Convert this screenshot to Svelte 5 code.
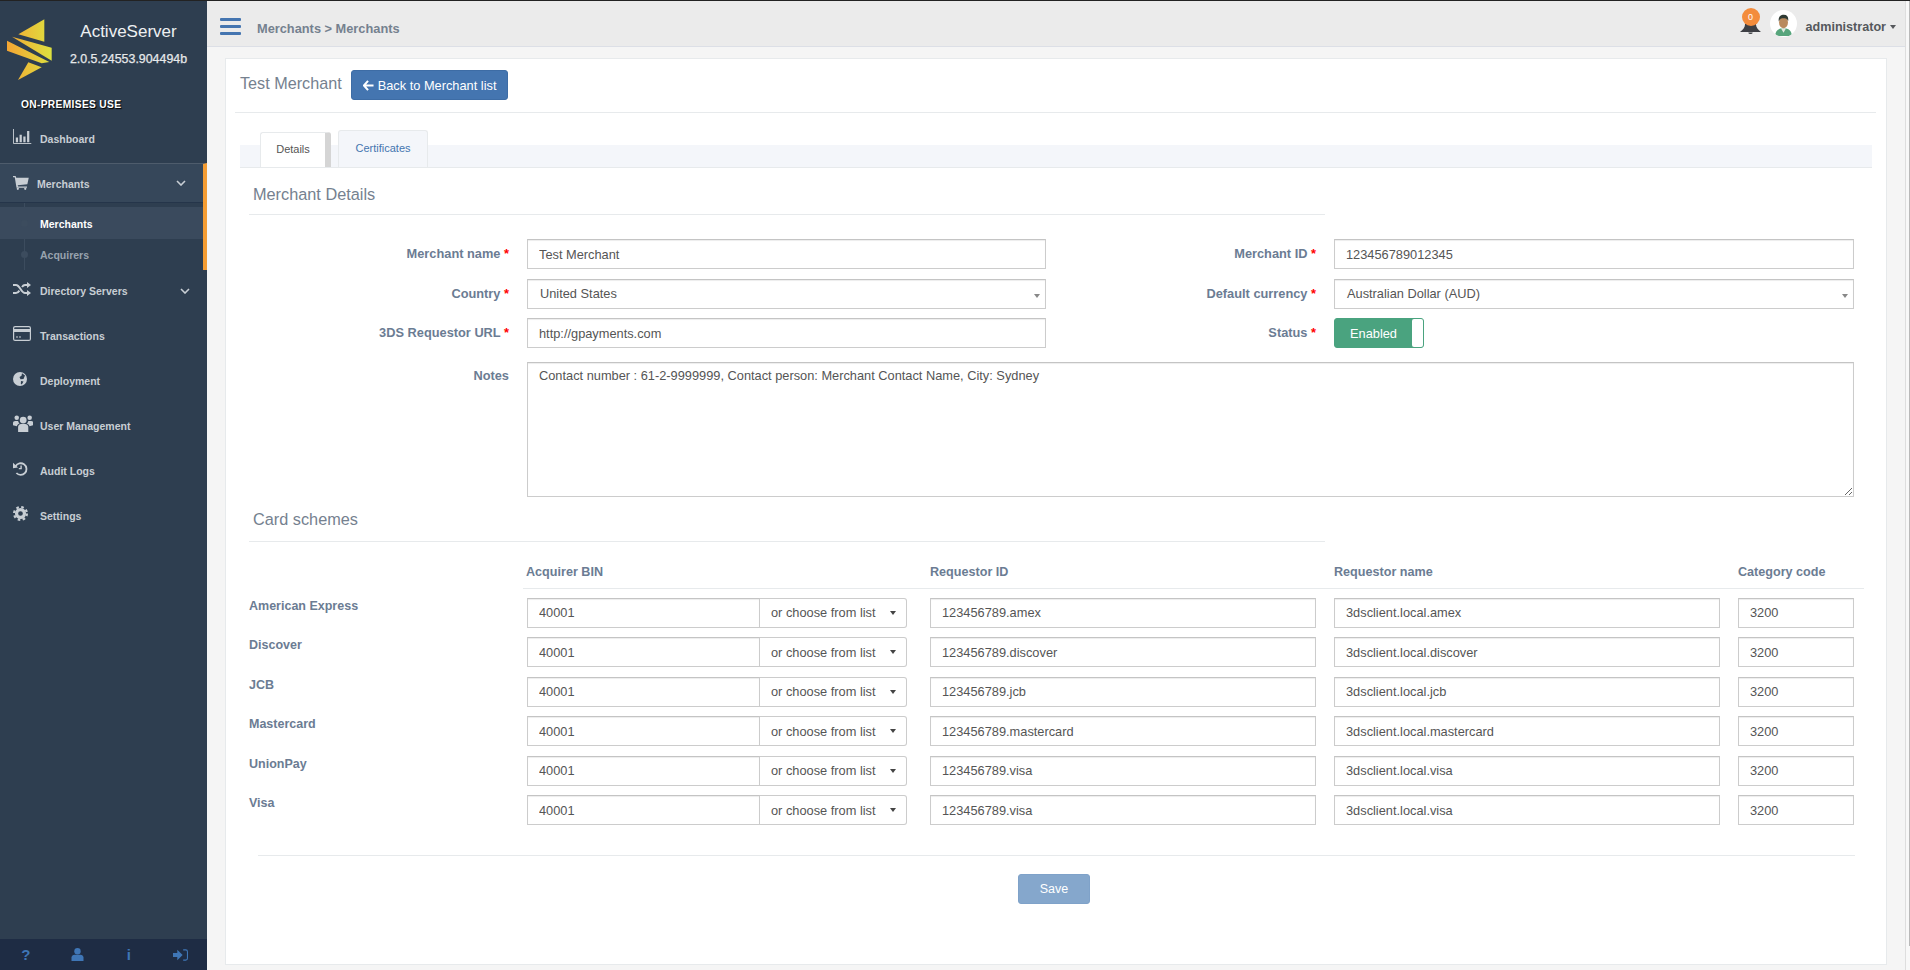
<script lang="ts">
	const schemes = [
		{ name: 'American Express', req: '123456789.amex', client: '3dsclient.local.amex' },
		{ name: 'Discover', req: '123456789.discover', client: '3dsclient.local.discover' },
		{ name: 'JCB', req: '123456789.jcb', client: '3dsclient.local.jcb' },
		{ name: 'Mastercard', req: '123456789.mastercard', client: '3dsclient.local.mastercard' },
		{ name: 'UnionPay', req: '123456789.visa', client: '3dsclient.local.visa' },
		{ name: 'Visa', req: '123456789.visa', client: '3dsclient.local.visa' }
	];
	const notes = 'Contact number : 61-2-9999999, Contact person: Merchant Contact Name, City: Sydney';
</script>

<div class="app">
	<aside class="sidebar">
		<div class="brand">
			<div class="brand-top">
				<svg class="logo" viewBox="21 27 135 183" aria-hidden="true">
					<defs>
						<linearGradient id="lg" gradientUnits="userSpaceOnUse" x1="21" y1="0" x2="156" y2="0">
							<stop offset="0" stop-color="#f4a533" />
							<stop offset="1" stop-color="#dde13f" />
						</linearGradient>
					</defs>
					<g fill="url(#lg)">
						<polygon points="133,28 55,73 133,95" />
						<polygon points="36,80 155,113 155,152" />
						<polygon points="21,92 21,122 125,160 148,156" />
						<polygon points="85,157 125,172 54,210" />
					</g>
				</svg>
				<div class="brand-text">
					<div class="product">ActiveServer</div>
					<div class="version">2.0.5.24553.904494b</div>
				</div>
			</div>
			<div class="usage">ON-PREMISES USE</div>
		</div>

		<nav>
			<a class="item">
				<svg class="ico" viewBox="0 0 20 16" aria-hidden="true">
					<path d="M0.500 0v15.500h19" fill="none" stroke="currentColor" />
					<path d="M3 9h2.400v5H3zM7 6h2.400v8H7zM11 8h2.400v6H11zM15 2h2.400v12H15z" fill="currentColor" />
				</svg>
				<span>Dashboard</span>
			</a>

			<div class="group">
				<a class="item head">
					<svg class="ico sm" viewBox="0 0 18 16" aria-hidden="true">
						<path d="M0 0h3l.7 2H18l-1.600 7.500-11 1 .4 1.500H16v1.500H4L2 1.500H0z" fill="currentColor" />
						<circle cx="5.500" cy="14.700" r="1.300" fill="currentColor" />
						<circle cx="14" cy="14.700" r="1.300" fill="currentColor" />
					</svg>
					<span>Merchants</span>
					<svg class="chev" viewBox="0 0 10 6" aria-hidden="true"><path d="M1 1l4 4 4-4" /></svg>
				</a>
				<div class="sub">
					<a class="sub-item active"><i></i><span>Merchants</span></a>
					<a class="sub-item"><i></i><span>Acquirers</span></a>
				</div>
			</div>

			<a class="item after-group">
				<svg class="ico sm" viewBox="0 0 18 14" aria-hidden="true">
					<path d="M0 3h3c4 0 5 8 9 8h2M0 11h3c1.500 0 2.500-1 3.400-2.400M9 5c.8-1.200 1.700-2 3-2h2" fill="none" stroke="currentColor" stroke-width="2" />
					<path d="M14 0l4 3-4 3zM14 8l4 3-4 3z" fill="currentColor" />
				</svg>
				<span>Directory Servers</span>
				<svg class="chev far" viewBox="0 0 10 6" aria-hidden="true"><path d="M1 1l4 4 4-4" /></svg>
			</a>
			<a class="item">
				<svg class="ico" viewBox="0 0 18 15" aria-hidden="true">
					<rect x=".6" y=".6" width="16.800" height="13.800" rx="1.500" fill="none" stroke="currentColor" stroke-width="1.200" />
					<path d="M1 3h16v3H1zM3 10.500h2v1H3zM6 10.500h2v1H6z" fill="currentColor" />
				</svg>
				<span>Transactions</span>
			</a>
			<a class="item">
				<svg class="ico sm" viewBox="0 0 14 14" aria-hidden="true">
					<circle cx="7" cy="7" r="7" fill="currentColor" />
					<path d="M9 1.200l3 2.300-1.500 3.500-3 .3-1-2.300 2-1.300zM8 9l2.500.5-1.700 3-1-.8z" fill="#2e3e50" />
				</svg>
				<span>Deployment</span>
			</a>
			<a class="item">
				<svg class="ico lg" viewBox="0 0 18 15" aria-hidden="true">
					<g fill="currentColor">
						<circle cx="9" cy="4.500" r="3" />
						<circle cx="3.300" cy="2.500" r="2" />
						<circle cx="14.700" cy="2.500" r="2" />
						<path d="M4.500 15V10.500C4.500 9 6 8 7 8h4c1 0 2.500 1 2.500 2.500V15z" />
						<path d="M0 9V7c0-1 .8-1.800 2-1.800h2.500c.2 1 .6 1.800 1.300 2.300C4.300 8 3.500 9 3.500 10zM18 9V7c0-1-.8-1.800-2-1.800h-2.500c-.2 1-.6 1.800-1.300 2.300 1.500.5 2.300 1.500 2.300 2.500z" />
					</g>
				</svg>
				<span>User Management</span>
			</a>
			<a class="item">
				<svg class="ico sm" viewBox="0 0 15 14" aria-hidden="true">
					<path d="M2.600 4.200A5.800 5.800 0 1 1 3.400 11" fill="none" stroke="currentColor" stroke-width="1.800" />
					<path d="M0 .8l5 4.600-5 .8zM7.400 3.500h1.400v3.800H5.800V6h1.600z" fill="currentColor" />
				</svg>
				<span>Audit Logs</span>
			</a>
			<a class="item">
				<svg class="ico" viewBox="0 0 14 14" aria-hidden="true">
					<circle cx="7" cy="7" r="3.700" fill="none" stroke="currentColor" stroke-width="3" />
					<circle cx="7" cy="7" r="6" fill="none" stroke="currentColor" stroke-width="2" stroke-dasharray="2.400 2.310" />
				</svg>
				<span>Settings</span>
			</a>
		</nav>

		<div class="side-foot">
			<span class="glyph">?</span>
			<svg viewBox="0 0 12 13" aria-hidden="true">
				<circle cx="6" cy="3.200" r="3.200" fill="currentColor" />
				<path d="M0 13V9.500C0 8 1.500 6.800 3 6.800h6c1.500 0 3 1.200 3 2.700V13z" fill="currentColor" />
			</svg>
			<span class="glyph">i</span>
			<svg viewBox="0 0 14 11" aria-hidden="true">
				<path d="M0 3.700h4V.5l5 5-5 5V7.300H0z" fill="currentColor" />
				<path d="M9.500 .7h2.300c1 0 1.700.7 1.700 1.700v6.200c0 1-.7 1.700-1.700 1.700H9.500" fill="none" stroke="currentColor" />
			</svg>
		</div>
	</aside>

	<div class="main">
		<header class="topbar">
			<div class="burger"><i></i><i></i><i></i></div>
			<div class="crumbs">Merchants &gt; Merchants</div>
			<div class="user">
				<div class="bell">
					<svg viewBox="0 0 21 15" aria-hidden="true">
						<path d="M10.500 0C6 0 5 3 5 5.500c0 3-2 5-5 7.500h21c-3-2.500-5-4.500-5-7.500C16 3 15 0 10.500 0z" fill="#3d3f44" />
						<path d="M8.300 13.500a2.200 1.500 0 0 0 4.400 0z" fill="#3d3f44" />
					</svg>
					<span class="badge">0</span>
				</div>
				<div class="avatar">
					<svg viewBox="0 0 26 26" aria-hidden="true">
						<path d="M5 25c0-5 3-7.500 8-7.500s8 2.500 8 7.500z" fill="#57a57c" />
						<path d="M10.500 17.500h5L13 22z" fill="#e0e8df" />
						<ellipse cx="13" cy="12" rx="4.300" ry="5.500" fill="#b98a5e" />
						<path d="M8.500 11c-.8-4 1.500-6.500 4.800-6.500S18 7 17.500 10.500c-1-2-2.500-2.500-4.500-2.500s-3.500.5-4.500 3z" fill="#2f3a33" />
					</svg>
				</div>
				<span class="uname">administrator</span>
				<span class="ucaret"></span>
			</div>
		</header>

		<main class="content">
			<section class="card">
				<div class="card-head">
					<h2>Test Merchant</h2>
					<button class="back" type="button">
						<svg viewBox="0 0 12 11" aria-hidden="true"><path d="M5.500 .5L1 5.500l4.500 5M1.500 5.500H11.500" fill="none" stroke="currentColor" stroke-width="2.200" /></svg>
						Back to Merchant list
					</button>
				</div>

				<div class="tabs">
					<div class="tab current">Details</div>
					<div class="tab">Certificates</div>
				</div>

				<div class="pane">
					<h3>Merchant Details</h3>
					<div class="form">
						<label class="lbl" for="mn">Merchant name <b>*</b></label>
						<input id="mn" class="inp" value="Test Merchant" />
						<label class="lbl" for="mi">Merchant ID <b>*</b></label>
						<input id="mi" class="inp" value="123456789012345" />

						<span class="lbl">Country <b>*</b></span>
						<div class="inp sel">United States<i></i></div>
						<span class="lbl">Default currency <b>*</b></span>
						<div class="inp sel">Australian Dollar (AUD)<i></i></div>

						<label class="lbl" for="ur">3DS Requestor URL <b>*</b></label>
						<input id="ur" class="inp" value="http://gpayments.com" />
						<span class="lbl">Status <b>*</b></span>
						<div class="toggle"><span>Enabled</span><i></i></div>

						<label class="lbl notes-lbl" for="no">Notes</label>
						<textarea id="no" class="inp notes" value={notes}></textarea>
					</div>

					<h3 class="schemes-title">Card schemes</h3>
					<div class="th">
						<span>Acquirer BIN</span>
						<span>Requestor ID</span>
						<span>Requestor name</span>
						<span>Category code</span>
					</div>
					<div class="schemes">
						{#each schemes as s (s.name)}
							<div class="scheme-name">{s.name}</div>
							<div class="bin">
								<input class="inp" value="40001" />
								<div class="choose">or choose from list<i></i></div>
							</div>
							<input class="inp c-req" value={s.req} />
							<input class="inp c-name" value={s.client} />
							<input class="inp c-code" value="3200" />
						{/each}
					</div>

					<div class="actions">
						<button class="save" type="button">Save</button>
					</div>
				</div>
			</section>
		</main>
	</div>

	<div class="scrollbar"><i></i></div>
</div>

<style>
	:global(body) {
		background: #f5f5f5;
		font-family: 'Liberation Sans', Arial, sans-serif;
		margin: 0;
	}

	.app {
		border-top: 1px solid #222;
		box-sizing: border-box;
		display: grid;
		grid-template-columns: 207px 1fr 5px;
		height: 970px;
		overflow: hidden;
	}

	/* sidebar */
	.sidebar {
		background: #2e3e50;
		display: flex;
		flex-direction: column;
		height: 969px;
	}

	.brand {
		height: 115px;
	}

	.brand-top {
		display: flex;
		padding: 18px 0 0 7px;
	}

	.logo {
		display: block;
		height: 61px;
		width: 45px;
	}

	.brand-text {
		color: #fff;
		flex: 1;
		padding-right: 2px;
		text-align: center;
	}

	.product {
		color: #eef0f2;
		font-size: 17px;
		line-height: 20px;
		margin-top: 3px;
	}

	.version {
		color: #e6e8ea;
		font-size: 12.400px;
		line-height: 16px;
		margin-top: 9px;
		-webkit-text-stroke: 0.25px #e6e8ea;
	}

	.usage {
		color: #fff;
		font-size: 10.200px;
		font-weight: 700;
		letter-spacing: 0.35px;
		margin: 19px 0 0 21px;
		text-shadow: 1px 1px 1px #000;
	}

	.item {
		align-items: center;
		color: #c8ced4;
		display: flex;
		font-size: 10.500px;
		font-weight: 700;
		height: 45px;
		padding-left: 13px;
		position: relative;
	}

	.item span {
		left: 40px;
		position: absolute;
	}

	.ico {
		display: block;
		height: 15px;
		margin-top: -4px;
		width: auto;
	}

	.ico.sm {
		height: 14px;
	}

	.ico.lg {
		height: 17px;
	}

	.chev {
		fill: none;
		height: 6px;
		left: 176px;
		position: absolute;
		stroke: #c8ced4;
		stroke-width: 1.600;
		width: 10px;
	}

	.chev.far {
		left: 180px;
	}

	.group {
		background: #2e3e50;
		border-right: 4px solid #f59d33;
		border-top: 1px solid #4e5c6c;
		height: 106px;
		margin-top: 2px;
	}

	.after-group {
		height: 44px;
		margin-top: -1px;
	}

	.head {
		background: #36475a;
		border-bottom: 1px solid #25354a;
		box-sizing: border-box;
		height: 39px;
	}

	.head span {
		left: 37px;
		padding-top: 2px;
	}

	.head .ico {
		margin-top: 0;
	}

	.sub {
		padding-top: 4px;
		position: relative;
	}

	.sub::before {
		background: #3c4c5e;
		bottom: 0;
		content: '';
		left: 24px;
		position: absolute;
		top: 0;
		width: 1px;
	}

	.sub-item {
		align-items: center;
		color: #98a3ae;
		display: flex;
		font-size: 10.500px;
		font-weight: 700;
		height: 31px;
		position: relative;
	}

	.sub-item.active {
		background: #3a4a5d;
		color: #fff;
		height: 32px;
		padding-top: 1px;
		box-sizing: border-box;
	}

	.sub-item i {
		background: #3c4c5e;
		border-radius: 50%;
		height: 7px;
		left: 21px;
		position: absolute;
		width: 7px;
	}

	.sub-item span {
		padding-left: 40px;
	}

	.side-foot {
		align-items: center;
		background: #1e2c44;
		color: #3f76b6;
		display: grid;
		grid-template-columns: repeat(4, 1fr);
		height: 31px;
		justify-items: center;
		margin-top: auto;
		padding-right: 1px;
	}

	.side-foot svg {
		height: 13px;
		width: 13px;
	}

	.side-foot svg:last-child {
		height: 12px;
		width: 15px;
	}

	.glyph {
		font-size: 15px;
		font-weight: 700;
		line-height: 1;
	}

	/* header */
	.main {
		display: flex;
		flex-direction: column;
		min-width: 0;
	}

	.topbar {
		background: #ebebeb;
		border-bottom: 1px solid #dcdfe6;
		box-sizing: border-box;
		display: flex;
		flex: none;
		height: 46px;
		padding: 0 9px 0 13px;
	}

	.burger {
		display: flex;
		flex-direction: column;
		gap: 3.500px;
		margin: 17px 16px 0 0;
		width: 21px;
	}

	.burger i {
		background: #4475b0;
		border-radius: 1px;
		height: 3.300px;
	}

	.crumbs {
		color: #75818f;
		font-size: 12.800px;
		font-weight: 700;
		line-height: 16px;
		margin-top: 20px;
	}

	.user {
		align-items: center;
		display: flex;
		height: 45px;
		margin-left: auto;
	}

	.bell {
		align-self: flex-start;
		height: 26px;
		margin: 7px 9px 0 0;
		position: relative;
		width: 21px;
	}

	.bell svg {
		bottom: 0;
		display: block;
		height: 15px;
		left: 0;
		position: absolute;
		width: 21px;
	}

	.badge {
		background: #f38c3c;
		border-radius: 50%;
		color: #fff;
		font-size: 9px;
		height: 18px;
		left: 2px;
		line-height: 18px;
		position: absolute;
		text-align: center;
		top: 0;
		width: 18px;
	}

	.avatar {
		background: #fff;
		border-radius: 50%;
		height: 27px;
		margin: 0 9px 0 0;
		overflow: hidden;
		width: 27px;
	}

	.avatar svg {
		display: block;
	}

	.uname {
		color: #55585c;
		font-size: 12.600px;
		font-weight: 700;
		padding-top: 6px;
	}

	.ucaret {
		border-left: 3.500px solid transparent;
		border-right: 3.500px solid transparent;
		border-top: 4px solid #55585c;
		margin: 6px 0 0 4px;
	}

	/* content */
	.content {
		flex: 1;
		padding: 11px 18px 5px;
	}

	.card {
		background: #fff;
		border: 1px solid #e7eaec;
		box-sizing: border-box;
		height: 100%;
		padding: 11px 10px 0 9px;
	}

	.card-head {
		align-items: center;
		border-bottom: 1px solid #e7eaec;
		display: flex;
		gap: 9px;
		height: 30px;
		margin-bottom: 17px;
		padding: 0 0 12px 5px;
	}

	h2 {
		color: #75818f;
		font-size: 16.200px;
		font-weight: 400;
		margin: -3px 0 0;
	}

	.back {
		align-items: center;
		background: #4475b0;
		border: 1px solid #3d6ca5;
		border-radius: 3px;
		color: #fff;
		display: flex;
		font-family: inherit;
		font-size: 12.800px;
		gap: 4px;
		height: 30px;
		padding: 0 11px;
		white-space: nowrap;
		width: 157px;
	}

	.back svg {
		flex: none;
		height: 11px;
		width: 11px;
	}

	.tabs {
		align-items: flex-end;
		background: linear-gradient(to bottom, transparent 15px, #f4f6fa 15px);
		border-bottom: 1px solid #e7eaec;
		display: flex;
		gap: 7px;
		height: 37px;
		margin: 0 4px 0 5px;
		padding-left: 20px;
	}

	.tab {
		background: #f4f6fa;
		border: 1px solid #e7eaec;
		border-bottom: 0;
		border-radius: 3px 3px 0 0;
		box-sizing: border-box;
		color: #4475b0;
		font-size: 11px;
		height: 37px;
		line-height: 34px;
		text-align: center;
		width: 90px;
	}

	.tab.current {
		background: #fff;
		border-right: 6px solid #d5d5d5;
		color: #555;
		height: 35px;
		line-height: 33px;
		width: 71px;
	}

	.pane {
		padding-left: 14px;
	}

	h3 {
		border-bottom: 1px solid #e7eaec;
		color: #75818f;
		font-size: 16.300px;
		font-weight: 400;
		height: 46px;
		line-height: 52px;
		margin: 0;
		padding-left: 4px;
		width: 1072px;
	}

	.form {
		display: grid;
		grid-template-columns: 278px 519px 288px 520px;
		grid-template-rows: 30px 30px 30px 139px;
		margin-top: 24px;
		row-gap: 9.500px;
	}

	.lbl {
		color: #6b7c93;
		font-size: 12.800px;
		font-weight: 700;
		line-height: 29px;
		padding-right: 18px;
		text-align: right;
	}

	.lbl b {
		color: #f00;
	}

	.inp {
		background: #fff;
		border: 1px solid #ccc;
		border-top-color: #c4c4c4;
		box-shadow: inset 0 1px 1px rgba(0, 0, 0, 0.075);
		box-sizing: border-box;
		color: #555;
		font-family: inherit;
		font-size: 12.800px;
		height: 30px;
		margin: 0;
		min-width: 0;
		outline: none;
		padding: 0 10px 0 11px;
		width: 100%;
	}

	.sel {
		align-items: center;
		display: flex;
		padding-left: 12px;
		position: relative;
	}

	.sel i {
		border-left: 3px solid transparent;
		border-right: 3px solid transparent;
		border-top: 4px solid #888;
		position: absolute;
		right: 5px;
		top: 14px;
	}

	.toggle {
		background: #4aa37f;
		border: 1px solid #4aa37f;
		border-radius: 3px;
		box-sizing: border-box;
		color: #fff;
		display: flex;
		font-size: 12.800px;
		height: 30px;
		justify-content: space-between;
		line-height: 30px;
		width: 90px;
	}

	.toggle span {
		padding-left: 15px;
	}

	.toggle i {
		background: #fff;
		border-radius: 2px;
		width: 11px;
	}

	.notes-lbl {
		margin-top: 3px;
	}

	.notes {
		grid-column: 2 / 5;
		height: 135px;
		line-height: 16px;
		margin-top: 4px;
		padding: 5px 10px 5px 11px;
		resize: both;
	}

	h3.schemes-title {
		height: 44px;
		line-height: 44px;
	}

	.th {
		border-bottom: 1px solid #e7eaec;
		color: #6b7c93;
		display: grid;
		font-size: 12.600px;
		font-weight: 700;
		grid-template-columns: 404px 404px 404px 1fr;
		height: 46px;
		line-height: 61px;
		margin: 0 12px 0 274px;
		padding-left: 3px;
	}

	.schemes {
		display: grid;
		grid-auto-rows: 30px;
		grid-template-columns: 278px 380px 409px 404px 134px;
		margin-top: 9px;
		row-gap: 9.600px;
	}

	.c-req {
		margin-left: 23px;
		width: 386px;
	}

	.c-name {
		margin-left: 18px;
		width: 386px;
	}

	.c-code {
		margin-left: 18px;
		width: 116px;
	}

	.scheme-name {
		color: #6b7c93;
		font-size: 12.500px;
		font-weight: 700;
		line-height: 16px;
	}

	.bin {
		display: grid;
		grid-template-columns: 233px 1fr;
	}

	.choose {
		align-items: center;
		background: #fff;
		border: 1px solid #ccc;
		border-left: 0;
		border-radius: 0 3px 3px 0;
		box-sizing: border-box;
		color: #555;
		display: flex;
		font-size: 12.800px;
		height: 30px;
		padding-left: 11px;
		position: relative;
	}

	.choose i {
		border-left: 3.500px solid transparent;
		border-right: 3.500px solid transparent;
		border-top: 4px solid #444;
		position: absolute;
		right: 10px;
		top: 12px;
	}

	.actions {
		border-top: 1px solid #e7eaec;
		display: flex;
		justify-content: center;
		margin: 30px 0 0 9px;
		padding-top: 18px;
		width: 1597px;
	}

	.save {
		background: #85a7cc;
		border: 1px solid #7fa2c9;
		border-radius: 3px;
		color: #fff;
		font-family: inherit;
		font-size: 12.500px;
		height: 30px;
		margin-left: -5px;
		width: 72px;
	}

	.scrollbar {
		background: #f8f8f8;
		border-left: 1px solid #dedede;
		position: relative;
	}

	.scrollbar i {
		background: #b9b9b9;
		height: 945px;
		position: absolute;
		right: 0;
		top: 0;
		width: 1px;
	}
</style>
